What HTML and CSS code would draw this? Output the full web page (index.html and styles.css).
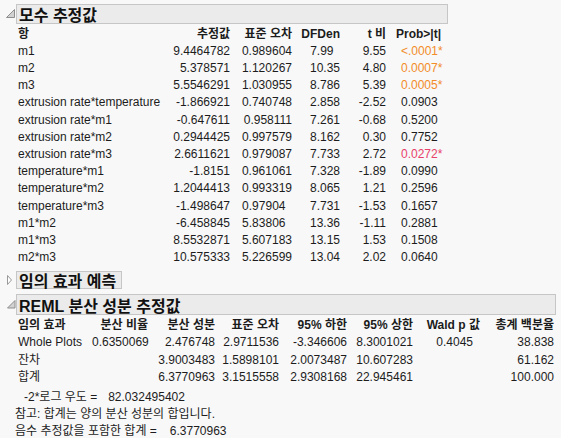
FILE: index.html
```html
<!DOCTYPE html>
<html lang="ko">
<head>
<meta charset="utf-8">
<title>모수 추정값</title>
<link rel="stylesheet" href="styles.css">
</head>
<body>
<div class="report">
  <section class="outline">
    <div class="ohead">
      <svg class="tri" width="16" height="20" viewBox="0 0 16 20"><path d="M14.5 5.5 V13.5 H6.5 Z" fill="#d2d2d2" stroke="#8e8e8e" stroke-width="1"/></svg>
      <div class="obox w1">모수 추정값</div>
    </div>
    <div class="grid t1">
      <div class="h l">항</div><div class="h r">추정값</div><div class="h r">표준 오차</div><div class="h r">DFDen</div><div class="h r">t 비</div><div class="h pr">Prob&gt;|t|</div>

      <div class="l">m1</div><div class="r">9.4464782</div><div class="r">0.989604</div><div class="r p1">7.99</div><div class="r">9.55</div><div class="pv or">&lt;.0001*</div>
      <div class="l">m2</div><div class="r">5.378571</div><div class="r">1.120267</div><div class="r">10.35</div><div class="r">4.80</div><div class="pv or">0.0007*</div>
      <div class="l">m3</div><div class="r">5.5546291</div><div class="r">1.030955</div><div class="r">8.786</div><div class="r">5.39</div><div class="pv or">0.0005*</div>
      <div class="l">extrusion rate*temperature</div><div class="r">-1.866921</div><div class="r">0.740748</div><div class="r">2.858</div><div class="r">-2.52</div><div class="pv">0.0903</div>
      <div class="l">extrusion rate*m1</div><div class="r">-0.647611</div><div class="r">0.958111</div><div class="r">7.261</div><div class="r">-0.68</div><div class="pv">0.5200</div>
      <div class="l">extrusion rate*m2</div><div class="r">0.2944425</div><div class="r">0.997579</div><div class="r">8.162</div><div class="r">0.30</div><div class="pv">0.7752</div>
      <div class="l">extrusion rate*m3</div><div class="r">2.6611621</div><div class="r">0.979087</div><div class="r">7.733</div><div class="r">2.72</div><div class="pv rd">0.0272*</div>
      <div class="l">temperature*m1</div><div class="r">-1.8151</div><div class="r">0.961061</div><div class="r">7.328</div><div class="r">-1.89</div><div class="pv">0.0990</div>
      <div class="l">temperature*m2</div><div class="r">1.2044413</div><div class="r">0.993319</div><div class="r">8.065</div><div class="r">1.21</div><div class="pv">0.2596</div>
      <div class="l">temperature*m3</div><div class="r">-1.498647</div><div class="r p1">0.97904</div><div class="r">7.731</div><div class="r">-1.53</div><div class="pv">0.1657</div>
      <div class="l">m1*m2</div><div class="r">-6.458845</div><div class="r p1">5.83806</div><div class="r">13.36</div><div class="r">-1.11</div><div class="pv">0.2881</div>
      <div class="l">m1*m3</div><div class="r">8.5532871</div><div class="r">5.607183</div><div class="r">13.15</div><div class="r">1.53</div><div class="pv">0.1508</div>
      <div class="l">m2*m3</div><div class="r">10.575333</div><div class="r">5.226599</div><div class="r">13.04</div><div class="r">2.02</div><div class="pv">0.0640</div>
    </div>
  </section>

  <section class="outline closed">
    <div class="ohead">
      <svg class="tri" width="16" height="18" viewBox="0 0 16 18"><path d="M7.5 4.5 L11.5 9 L7.5 13.5 Z" fill="#ffffff" stroke="#9a9a9a" stroke-width="1"/></svg>
      <div class="obox w2">임의 효과 예측</div>
    </div>
  </section>

  <section class="outline reml">
    <div class="ohead">
      <svg class="tri" width="16" height="21" viewBox="0 0 16 21"><path d="M15 6.5 V14 H7.5 Z" fill="#d2d2d2" stroke="#8e8e8e" stroke-width="1"/></svg>
      <div class="obox w3">REML 분산 성분 추정값</div>
    </div>
    <div class="grid t3">
      <div class="h l">임의 효과</div><div class="h r">분산 비율</div><div class="h r">분산 성분</div><div class="h r">표준 오차</div><div class="h r">95% 하한</div><div class="h r">95% 상한</div><div class="h r">Wald p 값</div><div class="h r">총계 백분율</div>

      <div class="l">Whole Plots</div><div class="r">0.6350069</div><div class="r">2.476748</div><div class="r">2.9711536</div><div class="r">-3.346606</div><div class="r">8.3001021</div><div class="r wp">0.4045</div><div class="r">38.838</div>
      <div class="l">잔차</div><div class="r"></div><div class="r">3.9003483</div><div class="r">1.5898101</div><div class="r">2.0073487</div><div class="r">10.607283</div><div class="r"></div><div class="r">61.162</div>
      <div class="l">합계</div><div class="r"></div><div class="r">6.3770963</div><div class="r">3.1515558</div><div class="r">2.9308168</div><div class="r">22.945461</div><div class="r"></div><div class="r">100.000</div>
    </div>
    <div class="notes">
      <div class="note ll"><span class="lab">-2*로그 우도 =</span><span class="num n1">82.032495402</span></div>
      <div class="note">참고: 합계는 양의 분산 성분의 합입니다.</div>
      <div class="note"><span class="lab">음수 추정값을 포함한 합계 =</span><span class="num n2">6.3770963</span></div>
    </div>
  </section>
</div>
</body>
</html>
```
FILE: styles.css
```css
html, body {
  margin: 0;
  padding: 0;
  background: #f8f8f8;
}
body {
  font-family: "Liberation Sans", "Noto Sans CJK KR", sans-serif;
  font-size: 12px;
  color: #1c1c1c;
}
.report {
  padding-top: 4px;
}
.ohead {
  display: flex;
  align-items: center;
}
.tri {
  flex: none;
  display: block;
}
.obox {
  box-sizing: border-box;
  background: #ebebeb;
  border: 1px solid #c6c6c6;
  font-weight: bold;
  font-size: 16px;
  color: #111;
  padding-left: 2px;
  white-space: nowrap;
  display: flex;
  align-items: center;
}
.w1 { width: 432px; height: 20px; }
.w2 { height: 18px; padding-right: 5px; }
.w3 { width: 540px; height: 21px; }

.closed { margin-top: 5px; }
.reml { margin-top: 5px; }

.grid {
  display: grid;
  margin-left: 18px;
  line-height: 17.2px;
  white-space: nowrap;
}
.t1 {
  margin-top: 1.5px;
  grid-template-columns: 152px 60px 62px 48px 46px 62px;
}
.t3 {
  margin-top: 1.5px;
  line-height: 17.5px;
  grid-template-columns: 74px 56px 67px 64px 68px 66px 67px 74px;
}
.h { font-weight: bold; }
.l { text-align: left; }
.r { text-align: right; }
.p1 { padding-right: 6.5px; }
.pr { padding-left: 10px; }
.pv { padding-left: 15px; }
.or { color: #f28c28; }
.rd { color: #e8416a; }
.wp { padding-right: 7px; }

.notes {
  margin-top: 2px;
  line-height: 17px;
  white-space: nowrap;
}
.note { padding-left: 15px; display: flex; }
.note.ll { padding-left: 24px; }
.n1 { margin-left: 11px; }
.n2 { margin-left: 13px; }
```
